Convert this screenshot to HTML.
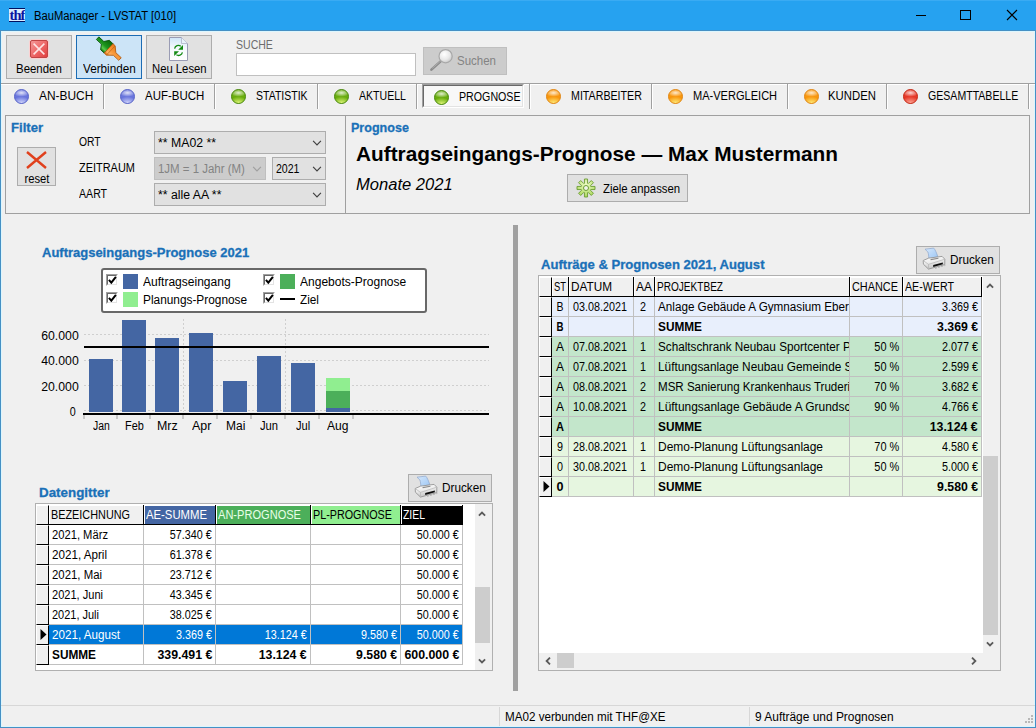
<!DOCTYPE html>
<html>
<head>
<meta charset="utf-8">
<title>BauManager - LVSTAT [010]</title>
<style>
*{box-sizing:border-box;margin:0;padding:0}
html,body{width:1036px;height:728px;overflow:hidden;background:#f0f0f0}
body{font-family:"Liberation Sans",sans-serif;font-size:12px;color:#000;position:relative}
.a{position:absolute}
.t{position:absolute;white-space:nowrap}
#win{position:absolute;left:0;top:30px;width:1036px;height:698px;background:#f0f0f0;border:1px solid #4590c4;box-shadow:inset 0 0 0 1px #dcf6fe}
#title{position:absolute;left:0;top:0;width:1036px;height:30px;background:#26a2f0;border-top:1px solid #3aabf3}
.btn{position:absolute;background:#e1e1e1;border:1px solid #adadad}
.btn.sel{background:#cce4f7;border-color:#1c6cb4}
.btn.dis{background:#cccccc;border-color:#bfbfbf}
.sep{position:absolute;width:2px;top:84px;height:25px;border-left:1px solid #a0a0a0;border-right:1px solid #fff}
.ball{position:absolute;width:15px;height:15px;border-radius:50%}
.ball.b{background:radial-gradient(ellipse 62% 30% at 50% 22%,rgba(255,255,255,.8),rgba(255,255,255,0) 100%),radial-gradient(ellipse 75% 55% at 50% 105%,#dce0ff,rgba(220,224,255,0) 100%),#6874dc;border:1px solid #5a66c8}
.ball.g{background:radial-gradient(ellipse 62% 30% at 50% 22%,rgba(255,255,255,.8),rgba(255,255,255,0) 100%),radial-gradient(ellipse 75% 55% at 50% 105%,#ecff84,rgba(236,255,132,0) 100%),#68ac0c;border:1px solid #4c8a12}
.ball.o{background:radial-gradient(ellipse 62% 30% at 50% 22%,rgba(255,255,255,.8),rgba(255,255,255,0) 100%),radial-gradient(ellipse 75% 55% at 50% 105%,#fff484,rgba(255,244,132,0) 100%),#f8960c;border:1px solid #e08818}
.ball.r{background:radial-gradient(ellipse 62% 30% at 50% 22%,rgba(255,255,255,.8),rgba(255,255,255,0) 100%),radial-gradient(ellipse 75% 55% at 50% 105%,#ffb0a0,rgba(255,176,160,0) 100%),#e63828;border:1px solid #c42c18}
.combo{position:absolute;background:#e1e1e1;border:1px solid #adadad;height:23px}
.combo.dis{background:#cccccc;border-color:#bfbfbf}
.grid{position:absolute;background:#fff;border:1px solid #b0b0b0}
.ln{position:absolute;background:#a0a0a0}
</style>
</head>
<body>
<div id="win"></div>
<div id="title"></div>

<div class="a" style="left:9px;top:8px;width:16px;height:14px;background:#d8ecff;border-top:1px solid #001060;border-bottom:1px solid #001060;overflow:hidden"><div class="t" style="left:0;top:-2px;width:16px;text-align:center;font-family:'Liberation Serif',serif;font-weight:bold;font-size:14.5px;line-height:16px;height:16px;color:#0a14a0;letter-spacing:-0.9px">thf</div></div>
<div class="t" style="top:9px;font-size:12px;line-height:14px;height:14px;color:#000;left:33.6px;transform-origin:0 50%;transform:scaleX(0.9351);">BauManager - LVSTAT [010]</div>
<svg class="a" style="left:900px;top:0" width="136" height="31" viewBox="0 0 136 31">
 <path d="M16 15.5h10" stroke="#000" stroke-width="1" fill="none"/>
 <rect x="60.5" y="10.5" width="10" height="9" stroke="#000" stroke-width="1" fill="none"/>
 <path d="M107 10l10 10M117 10l-10 10" stroke="#000" stroke-width="1.1" fill="none"/>
</svg>
<div class="btn" style="left:6px;top:35px;width:66px;height:44px"></div>
<div class="btn sel" style="left:76px;top:35px;width:66px;height:44px"></div>
<div class="btn" style="left:146px;top:35px;width:66px;height:44px"></div>
<div class="t" style="top:62px;font-size:12px;line-height:14px;height:14px;color:#000;left:16.3px;transform-origin:0 50%;transform:scaleX(0.9532);">Beenden</div>
<div class="t" style="top:62px;font-size:12px;line-height:14px;height:14px;color:#000;left:83.3px;transform-origin:0 50%;transform:scaleX(0.9769);">Verbinden</div>
<div class="t" style="top:62px;font-size:12px;line-height:14px;height:14px;color:#000;left:152.3px;transform-origin:0 50%;transform:scaleX(0.9406);">Neu Lesen</div>
<svg class="a" style="left:0;top:31px;z-index:2" width="520" height="50" viewBox="0 31 520 50">
<defs>
<linearGradient id="gr" x1="0" y1="0" x2="1" y2="1"><stop offset="0" stop-color="#f49a9a"/><stop offset="0.5" stop-color="#ee6a6a"/><stop offset="1" stop-color="#e03a3a"/></linearGradient>
<linearGradient id="gp" x1="0" y1="0" x2="0" y2="1"><stop offset="0" stop-color="#cfe6f8"/><stop offset="0.45" stop-color="#f4f9fd"/><stop offset="1" stop-color="#ffffff"/></linearGradient>
<linearGradient id="gg" x1="0" y1="0" x2="0" y2="1"><stop offset="0" stop-color="#0a6a0a"/><stop offset="0.55" stop-color="#1e961e"/><stop offset="0.8" stop-color="#5ccc4c"/><stop offset="1" stop-color="#0c700c"/></linearGradient>
<linearGradient id="go" x1="0" y1="0" x2="0" y2="1"><stop offset="0" stop-color="#e87818"/><stop offset="0.5" stop-color="#f89838"/><stop offset="0.8" stop-color="#ffb060"/><stop offset="1" stop-color="#d86808"/></linearGradient>
<radialGradient id="gl" cx="0.4" cy="0.35" r="0.7"><stop offset="0" stop-color="#ffffff"/><stop offset="0.6" stop-color="#e8e8e8"/><stop offset="1" stop-color="#c4c4c4"/></radialGradient>
</defs>
<!-- Beenden -->
<rect x="29.5" y="39.5" width="19" height="19" rx="2.5" fill="none" stroke="#fbd0d0" stroke-width="1"/>
<rect x="30.5" y="40.5" width="17" height="17" rx="1.5" fill="url(#gr)" stroke="#c04444" stroke-width="1"/>
<path d="M33.6 43.6L44.4 54.4M44.4 43.6L33.6 54.4" stroke="#fde4e4" stroke-width="1.5" fill="none"/>
<!-- Verbinden plug -->
<g transform="translate(108.6 48.4) rotate(43)">
<path d="M-15 -1.8H-8.2L-5 -6.4H0V6.4H-5L-8.2 1.8H-15Z" fill="url(#gg)" stroke="#065006" stroke-width="0.8"/>
<path d="M0 -6.4H3L8.2 -1.8H15.6V1.8H8.2L3 6.4H0Z" fill="url(#go)" stroke="#b05a10" stroke-width="0.8"/>
<path d="M3 -6V6" stroke="#c06818" stroke-width="0.7"/>
</g>
<!-- Neu Lesen page -->
<path d="M169.5 37.5H181.5L187.5 43.5V60.5H169.5Z" fill="url(#gp)" stroke="#9a9cb4" stroke-width="1"/>
<path d="M181.5 37.5V43.5H187.5" fill="#e8f2fa" stroke="#b0b4c8" stroke-width="0.8"/>
<path d="M174.6 48.6A3.9 3.9 0 0 1 180.8 46.2" fill="none" stroke="#138a13" stroke-width="1.3"/>
<path d="M183 45V49.8H178.2Z" fill="#138a13"/>
<path d="M182.4 52.4A3.9 3.9 0 0 1 176.4 54.8" fill="none" stroke="#138a13" stroke-width="1.3"/>
<path d="M174.2 56V51.3H179Z" fill="#138a13"/>
<!-- Suchen magnifier -->
<path d="M440.6 61.4L431.4 69.6" stroke="#8c8c8c" stroke-width="2.6" stroke-linecap="round"/>
<path d="M441 60.6L432.2 68.4" stroke="#b4b4b4" stroke-width="0.8"/>
<circle cx="445.6" cy="56.2" r="6.6" fill="url(#gl)" stroke="#a8a8a8" stroke-width="1.2"/>
</svg>
<div class="t" style="top:38px;font-size:12px;line-height:14px;height:14px;color:#6d6d6d;left:236px;transform-origin:0 50%;transform:scaleX(0.8782);">SUCHE</div>
<div class="a" style="left:236px;top:53px;width:180px;height:23px;background:#fff;border:1px solid #c0c0c0"></div>
<div class="btn dis" style="left:423px;top:47px;width:84px;height:28px"></div>
<div class="t" style="top:54px;font-size:12px;line-height:14px;height:14px;color:#838383;left:457px;transform-origin:0 50%;transform:scaleX(0.9582);">Suchen</div>
<div class="a" style="left:1px;top:83px;width:1034px;height:1px;background:#a0a0a0"></div>
<div class="a" style="left:1px;top:84px;width:1034px;height:1px;background:#fff"></div>
<div class="sep" style="left:103px"></div>
<div class="sep" style="left:214px"></div>
<div class="sep" style="left:317px"></div>
<div class="sep" style="left:416px"></div>
<div class="sep" style="left:529px"></div>
<div class="sep" style="left:651px"></div>
<div class="sep" style="left:787px"></div>
<div class="sep" style="left:886px"></div>
<div class="sep" style="left:1028px"></div>
<div class="a" style="left:422px;top:84px;width:102px;height:24px;background:#f8f8f8;border:1px solid #fff;border-top-color:#a0a0a0;border-left-color:#a0a0a0"></div>
<div class="a" style="left:423px;top:85px;width:100px;height:22px;border:1px solid #e3e3e3;border-top-color:#696969;border-left-color:#696969"></div>
<div class="ball b" style="left:14px;top:89px"></div>
<div class="t" style="top:89px;font-size:12px;line-height:14px;height:14px;color:#000;left:39px;transform-origin:0 50%;transform:scaleX(0.9932);">AN-BUCH</div>
<div class="ball b" style="left:120px;top:89px"></div>
<div class="t" style="top:89px;font-size:12px;line-height:14px;height:14px;color:#000;left:145px;transform-origin:0 50%;transform:scaleX(0.9565);">AUF-BUCH</div>
<div class="ball g" style="left:231px;top:89px"></div>
<div class="t" style="top:89px;font-size:12px;line-height:14px;height:14px;color:#000;left:256px;transform-origin:0 50%;transform:scaleX(0.876);">STATISTIK</div>
<div class="ball g" style="left:334px;top:89px"></div>
<div class="t" style="top:89px;font-size:12px;line-height:14px;height:14px;color:#000;left:359px;transform-origin:0 50%;transform:scaleX(0.8789);">AKTUELL</div>
<div class="ball g" style="left:434px;top:90px"></div>
<div class="t" style="top:90px;font-size:12px;line-height:14px;height:14px;color:#000;left:459px;transform-origin:0 50%;transform:scaleX(0.8881);">PROGNOSE</div>
<div class="ball o" style="left:546px;top:89px"></div>
<div class="t" style="top:89px;font-size:12px;line-height:14px;height:14px;color:#000;left:571px;transform-origin:0 50%;transform:scaleX(0.8887);">MITARBEITER</div>
<div class="ball o" style="left:668px;top:89px"></div>
<div class="t" style="top:89px;font-size:12px;line-height:14px;height:14px;color:#000;left:693px;transform-origin:0 50%;transform:scaleX(0.9205);">MA-VERGLEICH</div>
<div class="ball o" style="left:804px;top:89px"></div>
<div class="t" style="top:89px;font-size:12px;line-height:14px;height:14px;color:#000;left:828.2px;transform-origin:0 50%;transform:scaleX(0.9453);">KUNDEN</div>
<div class="ball r" style="left:903px;top:89px"></div>
<div class="t" style="top:89px;font-size:12px;line-height:14px;height:14px;color:#000;left:928px;transform-origin:0 50%;transform:scaleX(0.8811);">GESAMTTABELLE</div>
<div class="a" style="left:5px;top:115px;width:1025px;height:99px;border:1px solid #a0a0a0"></div>
<div class="ln" style="left:345px;top:115px;width:1px;height:99px"></div>
<div class="t" style="top:121px;font-size:13px;line-height:14px;height:14px;color:#1a70b8;font-weight:bold;left:10.5px;transform-origin:0 50%;transform:scaleX(1.0095);-webkit-text-stroke:0.3px #1a70b8;">Filter</div>
<div class="t" style="top:121px;font-size:13px;line-height:14px;height:14px;color:#1a70b8;font-weight:bold;left:350.7px;transform-origin:0 50%;transform:scaleX(0.9655);-webkit-text-stroke:0.3px #1a70b8;">Prognose</div>
<div class="btn" style="left:17px;top:147px;width:39px;height:39px"></div>
<svg class="a" style="left:24px;top:150px" width="25" height="20" viewBox="0 0 25 20"><path d="M3 2L22 18M22 2L3 18" stroke="#e0401c" stroke-width="2.4" fill="none"/></svg>
<div class="t" style="top:172px;font-size:12px;line-height:14px;height:14px;color:#000;left:-163.5px;width:400px;text-align:center;transform-origin:50% 50%;transform:scaleX(0.9368);">reset</div>
<div class="t" style="top:135px;font-size:12px;line-height:14px;height:14px;color:#000;left:79px;transform-origin:0 50%;transform:scaleX(0.8597);">ORT</div>
<div class="t" style="top:161px;font-size:12px;line-height:14px;height:14px;color:#000;left:79px;transform-origin:0 50%;transform:scaleX(0.9113);">ZEITRAUM</div>
<div class="t" style="top:187px;font-size:12px;line-height:14px;height:14px;color:#000;left:79px;transform-origin:0 50%;transform:scaleX(0.8837);">AART</div>
<div class="combo" style="left:154px;top:131px;width:172px"></div>
<div class="combo dis" style="left:154px;top:157px;width:112px"></div>
<div class="combo" style="left:272px;top:157px;width:54px"></div>
<div class="combo" style="left:154px;top:183px;width:172px"></div>
<div class="t" style="top:136px;font-size:12px;line-height:14px;height:14px;color:#000;left:157.5px;transform-origin:0 50%;transform:scaleX(1.0229);">** MA02 **</div>
<div class="t" style="top:162px;font-size:12px;line-height:14px;height:14px;color:#838383;left:158px;transform-origin:0 50%;transform:scaleX(0.9546);">1JM = 1 Jahr (M)</div>
<div class="t" style="top:162px;font-size:12px;line-height:14px;height:14px;color:#000;left:276px;transform-origin:0 50%;transform:scaleX(0.88);">2021</div>
<div class="t" style="top:188px;font-size:12px;line-height:14px;height:14px;color:#000;left:157.5px;transform-origin:0 50%;transform:scaleX(1.0218);">** alle AA **</div>
<svg class="a" style="left:312px;top:140px" width="10" height="6" viewBox="0 0 10 6"><path d="M1.1 0.9L5 4.8L8.9 0.9" stroke="#404040" stroke-width="1.2" fill="none"/></svg>
<svg class="a" style="left:252.3px;top:166px" width="10" height="6" viewBox="0 0 10 6"><path d="M1.1 0.9L5 4.8L8.9 0.9" stroke="#a0a0a0" stroke-width="1.2" fill="none"/></svg>
<svg class="a" style="left:312px;top:166px" width="10" height="6" viewBox="0 0 10 6"><path d="M1.1 0.9L5 4.8L8.9 0.9" stroke="#404040" stroke-width="1.2" fill="none"/></svg>
<svg class="a" style="left:312px;top:192px" width="10" height="6" viewBox="0 0 10 6"><path d="M1.1 0.9L5 4.8L8.9 0.9" stroke="#404040" stroke-width="1.2" fill="none"/></svg>
<div class="t" style="top:142px;font-size:20.5px;line-height:24px;height:24px;color:#000;font-weight:bold;left:356px;transform-origin:0 50%;transform:scaleX(1.0146);">Auftragseingangs-Prognose — Max Mustermann</div>
<div class="t" style="top:175px;font-size:16px;line-height:20px;height:20px;color:#000;font-style:italic;left:356.3px;transform-origin:0 50%;transform:scaleX(1.0342);">Monate 2021</div>
<div class="btn" style="left:567px;top:174px;width:121px;height:28px"></div>
<div class="t" style="top:182px;font-size:12px;line-height:14px;height:14px;color:#000;left:603px;transform-origin:0 50%;transform:scaleX(0.9485);">Ziele anpassen</div>
<svg class="a" style="left:576px;top:178px" width="20" height="20" viewBox="-10 -10 20 20">
<defs><radialGradient id="gge" cx="0.5" cy="0.3" r="0.75"><stop offset="0" stop-color="#ecfac4"/><stop offset="1" stop-color="#a6d654"/></radialGradient></defs>
<path d="M-1.55 -4.70 L-1.55 -9.00 L1.55 -9.00 L1.55 -4.70 L2.23 -4.42 L5.27 -7.46 L7.46 -5.27 L4.42 -2.23 L4.70 -1.55 L9.00 -1.55 L9.00 1.55 L4.70 1.55 L4.42 2.23 L7.46 5.27 L5.27 7.46 L2.23 4.42 L1.55 4.70 L1.55 9.00 L-1.55 9.00 L-1.55 4.70 L-2.23 4.42 L-5.27 7.46 L-7.46 5.27 L-4.42 2.23 L-4.70 1.55 L-9.00 1.55 L-9.00 -1.55 L-4.70 -1.55 L-4.42 -2.23 L-7.46 -5.27 L-5.27 -7.46 L-2.23 -4.42Z" fill="url(#gge)" stroke="#6c9c34" stroke-width="0.9"/>
<circle cx="0" cy="0" r="2.5" fill="#f0f4e8" stroke="#6c9c34" stroke-width="1"/>
</svg>
<div class="a" style="left:513px;top:225px;width:5px;height:466px;background:#a0a0a0"></div>
<div class="t" style="top:245px;font-size:13px;line-height:16px;height:16px;color:#1a70b8;font-weight:bold;left:42.3px;transform-origin:0 50%;transform:scaleX(0.9989);-webkit-text-stroke:0.3px #1a70b8;">Auftragseingangs-Prognose 2021</div>
<div class="a" style="left:101px;top:268px;width:326px;height:45px;background:#fff;border:2px solid #686868;border-radius:3px"></div>
<div class="a" style="left:106px;top:274px;width:12px;height:12px;background:#fff;border:1px solid #fff;border-top-color:#a0a0a0;border-left-color:#a0a0a0"></div>
<div class="a" style="left:107px;top:275px;width:10px;height:10px;border:1px solid #e3e3e3;border-top-color:#696969;border-left-color:#696969"></div>
<svg class="a" style="left:108px;top:276px" width="9" height="9" viewBox="0 0 9 9"><path d="M0.9 3.9L3.3 6.6L7.9 0.9" stroke="#000" stroke-width="2" fill="none"/></svg>
<div class="a" style="left:106px;top:292px;width:12px;height:12px;background:#fff;border:1px solid #fff;border-top-color:#a0a0a0;border-left-color:#a0a0a0"></div>
<div class="a" style="left:107px;top:293px;width:10px;height:10px;border:1px solid #e3e3e3;border-top-color:#696969;border-left-color:#696969"></div>
<svg class="a" style="left:108px;top:294px" width="9" height="9" viewBox="0 0 9 9"><path d="M0.9 3.9L3.3 6.6L7.9 0.9" stroke="#000" stroke-width="2" fill="none"/></svg>
<div class="a" style="left:263px;top:274px;width:12px;height:12px;background:#fff;border:1px solid #fff;border-top-color:#a0a0a0;border-left-color:#a0a0a0"></div>
<div class="a" style="left:264px;top:275px;width:10px;height:10px;border:1px solid #e3e3e3;border-top-color:#696969;border-left-color:#696969"></div>
<svg class="a" style="left:265px;top:276px" width="9" height="9" viewBox="0 0 9 9"><path d="M0.9 3.9L3.3 6.6L7.9 0.9" stroke="#000" stroke-width="2" fill="none"/></svg>
<div class="a" style="left:263px;top:292px;width:12px;height:12px;background:#fff;border:1px solid #fff;border-top-color:#a0a0a0;border-left-color:#a0a0a0"></div>
<div class="a" style="left:264px;top:293px;width:10px;height:10px;border:1px solid #e3e3e3;border-top-color:#696969;border-left-color:#696969"></div>
<svg class="a" style="left:265px;top:294px" width="9" height="9" viewBox="0 0 9 9"><path d="M0.9 3.9L3.3 6.6L7.9 0.9" stroke="#000" stroke-width="2" fill="none"/></svg>
<div class="a" style="left:123px;top:274px;width:15px;height:15px;background:#4466a3"></div>
<div class="a" style="left:123px;top:292px;width:15px;height:15px;background:#90ee90"></div>
<div class="a" style="left:280px;top:274px;width:15px;height:15px;background:#4caf5a"></div>
<div class="a" style="left:280px;top:298px;width:15px;height:2px;background:#000"></div>
<div class="t" style="top:275px;font-size:12px;line-height:14px;height:14px;color:#000;left:143px;transform-origin:0 50%;transform:scaleX(1.0022);">Auftragseingang</div>
<div class="t" style="top:293px;font-size:12px;line-height:14px;height:14px;color:#000;left:143px;transform-origin:0 50%;transform:scaleX(0.9876);">Planungs-Prognose</div>
<div class="t" style="top:275px;font-size:12px;line-height:14px;height:14px;color:#000;left:300px;transform-origin:0 50%;transform:scaleX(1.0011);">Angebots-Prognose</div>
<div class="t" style="top:293px;font-size:12px;line-height:14px;height:14px;color:#000;left:300px;transform-origin:0 50%;transform:scaleX(0.9822);">Ziel</div>
<svg class="a" style="left:0;top:0" width="520" height="440" viewBox="0 0 520 440" shape-rendering="crispEdges">
<path d="M84 334.5H489" stroke="#cfcfcf" stroke-width="1" stroke-dasharray="2 2" fill="none"/>
<path d="M84 360.5H489" stroke="#cfcfcf" stroke-width="1" stroke-dasharray="2 2" fill="none"/>
<path d="M84 385.5H489" stroke="#cfcfcf" stroke-width="1" stroke-dasharray="2 2" fill="none"/>
<path d="M84 410.5H489" stroke="#cfcfcf" stroke-width="1" stroke-dasharray="2 2" fill="none"/>
<path d="M183.5 319V412" stroke="#cfcfcf" stroke-width="1" stroke-dasharray="2 2" fill="none"/>
<path d="M285.5 319V412" stroke="#cfcfcf" stroke-width="1" stroke-dasharray="2 2" fill="none"/>
<rect x="89" y="359" width="24" height="53" fill="#4466a3"/>
<rect x="122" y="320" width="24" height="92" fill="#4466a3"/>
<rect x="155" y="338" width="24" height="74" fill="#4466a3"/>
<rect x="189" y="333" width="24" height="79" fill="#4466a3"/>
<rect x="223" y="381" width="24" height="31" fill="#4466a3"/>
<rect x="257" y="356" width="24" height="56" fill="#4466a3"/>
<rect x="291" y="363" width="24" height="49" fill="#4466a3"/>
<rect x="326" y="378" width="24" height="13" fill="#90ee90"/>
<rect x="326" y="391" width="24" height="17" fill="#4caf5a"/>
<rect x="326" y="408" width="24" height="4" fill="#4466a3"/>
<rect x="84" y="346" width="405" height="2" fill="#000"/>
<rect x="83" y="413" width="406" height="2" fill="#000"/>
<rect x="83.5" y="415" width="1" height="4" fill="#a0a0a0" shape-rendering="auto"/>
<rect x="116.5" y="415" width="1" height="4" fill="#a0a0a0" shape-rendering="auto"/>
<rect x="149.5" y="415" width="1" height="4" fill="#a0a0a0" shape-rendering="auto"/>
<rect x="182.5" y="415" width="1" height="4" fill="#a0a0a0" shape-rendering="auto"/>
<rect x="216.5" y="415" width="1" height="4" fill="#a0a0a0" shape-rendering="auto"/>
<rect x="250.5" y="415" width="1" height="4" fill="#a0a0a0" shape-rendering="auto"/>
<rect x="284.5" y="415" width="1" height="4" fill="#a0a0a0" shape-rendering="auto"/>
<rect x="318.5" y="415" width="1" height="4" fill="#a0a0a0" shape-rendering="auto"/>
<rect x="352.5" y="415" width="1" height="4" fill="#a0a0a0" shape-rendering="auto"/>
</svg>
<div class="t" style="top:328.5px;font-size:12px;line-height:14px;height:14px;color:#000;right:957.8px;transform-origin:100% 50%;transform:scaleX(1.0217);">60.000</div>
<div class="t" style="top:354px;font-size:12px;line-height:14px;height:14px;color:#000;right:957.8px;transform-origin:100% 50%;transform:scaleX(1.0217);">40.000</div>
<div class="t" style="top:379.5px;font-size:12px;line-height:14px;height:14px;color:#000;right:957.8px;transform-origin:100% 50%;transform:scaleX(1.0217);">20.000</div>
<div class="t" style="top:405px;font-size:12px;line-height:14px;height:14px;color:#000;right:960.8px;transform-origin:100% 50%;transform:scaleX(0.8972);">0</div>
<div class="t" style="top:419px;font-size:12px;line-height:14px;height:14px;color:#000;left:93.4px;transform-origin:0 50%;transform:scaleX(0.8678);">Jan</div>
<div class="t" style="top:419px;font-size:12px;line-height:14px;height:14px;color:#000;left:125.2px;transform-origin:0 50%;transform:scaleX(0.9088);">Feb</div>
<div class="t" style="top:419px;font-size:12px;line-height:14px;height:14px;color:#000;left:157.4px;transform-origin:0 50%;transform:scaleX(1.035);">Mrz</div>
<div class="t" style="top:419px;font-size:12px;line-height:14px;height:14px;color:#000;left:191.8px;transform-origin:0 50%;transform:scaleX(1.0328);">Apr</div>
<div class="t" style="top:419px;font-size:12px;line-height:14px;height:14px;color:#000;left:225.6px;transform-origin:0 50%;transform:scaleX(0.9977);">Mai</div>
<div class="t" style="top:419px;font-size:12px;line-height:14px;height:14px;color:#000;left:259.79999999999995px;transform-origin:0 50%;transform:scaleX(0.9349);">Jun</div>
<div class="t" style="top:419px;font-size:12px;line-height:14px;height:14px;color:#000;left:296.0px;transform-origin:0 50%;transform:scaleX(0.9255);">Jul</div>
<div class="t" style="top:419px;font-size:12px;line-height:14px;height:14px;color:#000;left:327.4px;transform-origin:0 50%;transform:scaleX(1.0066);">Aug</div>
<div class="t" style="top:485px;font-size:13px;line-height:16px;height:16px;color:#1a70b8;font-weight:bold;left:39px;transform-origin:0 50%;transform:scaleX(1.0288);-webkit-text-stroke:0.3px #1a70b8;">Datengitter</div>
<div class="btn" style="left:408px;top:474px;width:84px;height:28px"></div>
<div class="t" style="top:481px;font-size:12px;line-height:14px;height:14px;color:#000;left:442.4px;transform-origin:0 50%;transform:scaleX(0.9779);">Drucken</div>
<svg class="a" style="left:410px;top:472px" width="30" height="30" viewBox="0 0 30 30">
<defs><linearGradient id="gpa410" x1="0" y1="0" x2="1" y2="1"><stop offset="0" stop-color="#d6e8fc"/><stop offset="1" stop-color="#9cc6f4"/></linearGradient>
<linearGradient id="gpb410" x1="0" y1="0" x2="0.3" y2="1"><stop offset="0" stop-color="#ffffff"/><stop offset="0.5" stop-color="#ededed"/><stop offset="1" stop-color="#c4c4c4"/></linearGradient></defs>
<path d="M7 5.2L15.7 4.1C17.2 5.6 18.6 9 19.8 12.6L10.9 14.9C10.7 12 10.5 9.6 9.9 8Z" fill="url(#gpa410)" stroke="#8ea6cc" stroke-width="0.7"/>
<path d="M5.2 16.5L10.7 14.1L24.1 12.4L26.8 15.2V20.6L10.5 25.1L5.4 20.2Z" fill="url(#gpb410)" stroke="#8c8c8c" stroke-width="0.8" stroke-linejoin="round"/>
<path d="M5.2 16.5L10.5 20.4L26.8 15.2" fill="none" stroke="#b4b4b4" stroke-width="0.7"/>
<path d="M10.5 20.4V25.1" stroke="#b4b4b4" stroke-width="0.7"/>
<path d="M12.6 15.6L20.4 14.2" stroke="#8a8a8a" stroke-width="1.1"/>
<path d="M15.2 21.1L24.8 18.5V20.2L15.2 22.9Z" fill="#0c0c0c"/>
<path d="M17 24.4L27.4 21.4" stroke="#a8a8a8" stroke-width="0.8" stroke-dasharray="2 1.2"/>
</svg>
<div class="grid" style="left:35px;top:503px;width:458px;height:168px"></div>
<div class="a" style="left:36px;top:505px;width:13px;height:20px;background:#f0f0f0;border-right:1px solid #000;border-bottom:1px solid #000;border-top:1px solid #fff;border-left:1px solid #fff"></div>
<div class="a" style="left:49px;top:505px;width:95px;height:20px;background:#fff;border-right:1px solid #000;border-bottom:1px solid #000"></div>
<div class="a" style="left:50px;top:506px;width:93px;height:18px;background:#f0f0f0"></div>
<div class="t" style="top:508px;font-size:12px;line-height:14px;height:14px;color:#000;left:51px;transform-origin:0 50%;transform:scaleX(0.9045);">BEZEICHNUNG</div>
<div class="a" style="left:144px;top:505px;width:72px;height:20px;background:#fff;border-right:1px solid #000;border-bottom:1px solid #000"></div>
<div class="a" style="left:145px;top:506px;width:70px;height:18px;background:#4466a3"></div>
<div class="t" style="top:508px;font-size:12px;line-height:14px;height:14px;color:#fff;left:146px;transform-origin:0 50%;transform:scaleX(0.9432);">AE-SUMME</div>
<div class="a" style="left:216px;top:505px;width:95px;height:20px;background:#fff;border-right:1px solid #000;border-bottom:1px solid #000"></div>
<div class="a" style="left:217px;top:506px;width:93px;height:18px;background:#4caf5a"></div>
<div class="t" style="top:508px;font-size:12px;line-height:14px;height:14px;color:#e8ffe8;left:218px;transform-origin:0 50%;transform:scaleX(0.9221);">AN-PROGNOSE</div>
<div class="a" style="left:311px;top:505px;width:90px;height:20px;background:#fff;border-right:1px solid #000;border-bottom:1px solid #000"></div>
<div class="a" style="left:312px;top:506px;width:88px;height:18px;background:#90ee90"></div>
<div class="t" style="top:508px;font-size:12px;line-height:14px;height:14px;color:#000;left:313px;transform-origin:0 50%;transform:scaleX(0.8974);">PL-PROGNOSE</div>
<div class="a" style="left:401px;top:505px;width:62px;height:20px;background:#fff;border-right:1px solid #000;border-bottom:1px solid #000"></div>
<div class="a" style="left:402px;top:506px;width:60px;height:18px;background:#000"></div>
<div class="t" style="top:508px;font-size:12px;line-height:14px;height:14px;color:#fff;left:403px;transform-origin:0 50%;transform:scaleX(0.8681);">ZIEL</div>
<div class="a" style="left:36px;top:525px;width:13px;height:20px;background:#f0f0f0;border-right:1px solid #000;border-bottom:1px solid #000;border-top:1px solid #fff;border-left:1px solid #fff"></div>
<div class="a" style="left:49px;top:525px;width:95px;height:20px;background:#fff;border-right:1px solid #c0c0c0;border-bottom:1px solid #c0c0c0"></div>
<div class="a" style="left:49px;top:525px;width:94px;height:20px;overflow:hidden">
<div class="t" style="top:3px;font-size:12px;line-height:14px;height:14px;color:#000;left:3px;transform-origin:0 50%;transform:scaleX(0.9328);">2021, März</div>
</div>
<div class="a" style="left:144px;top:525px;width:72px;height:20px;background:#fff;border-right:1px solid #c0c0c0;border-bottom:1px solid #c0c0c0"></div>
<div class="t" style="top:528px;font-size:12px;line-height:14px;height:14px;color:#000;right:824px;transform-origin:100% 50%;transform:scaleX(0.899);">57.340 €</div>
<div class="a" style="left:216px;top:525px;width:95px;height:20px;background:#fff;border-right:1px solid #c0c0c0;border-bottom:1px solid #c0c0c0"></div>
<div class="a" style="left:311px;top:525px;width:90px;height:20px;background:#fff;border-right:1px solid #c0c0c0;border-bottom:1px solid #c0c0c0"></div>
<div class="a" style="left:401px;top:525px;width:62px;height:20px;background:#fff;border-right:1px solid #c0c0c0;border-bottom:1px solid #c0c0c0"></div>
<div class="t" style="top:528px;font-size:12px;line-height:14px;height:14px;color:#000;right:577px;transform-origin:100% 50%;transform:scaleX(0.899);">50.000 €</div>
<div class="a" style="left:36px;top:545px;width:13px;height:20px;background:#f0f0f0;border-right:1px solid #000;border-bottom:1px solid #000;border-top:1px solid #fff;border-left:1px solid #fff"></div>
<div class="a" style="left:49px;top:545px;width:95px;height:20px;background:#fff;border-right:1px solid #c0c0c0;border-bottom:1px solid #c0c0c0"></div>
<div class="a" style="left:49px;top:545px;width:94px;height:20px;overflow:hidden">
<div class="t" style="top:3px;font-size:12px;line-height:14px;height:14px;color:#000;left:3px;transform-origin:0 50%;transform:scaleX(0.9697);">2021, April</div>
</div>
<div class="a" style="left:144px;top:545px;width:72px;height:20px;background:#fff;border-right:1px solid #c0c0c0;border-bottom:1px solid #c0c0c0"></div>
<div class="t" style="top:548px;font-size:12px;line-height:14px;height:14px;color:#000;right:824px;transform-origin:100% 50%;transform:scaleX(0.899);">61.378 €</div>
<div class="a" style="left:216px;top:545px;width:95px;height:20px;background:#fff;border-right:1px solid #c0c0c0;border-bottom:1px solid #c0c0c0"></div>
<div class="a" style="left:311px;top:545px;width:90px;height:20px;background:#fff;border-right:1px solid #c0c0c0;border-bottom:1px solid #c0c0c0"></div>
<div class="a" style="left:401px;top:545px;width:62px;height:20px;background:#fff;border-right:1px solid #c0c0c0;border-bottom:1px solid #c0c0c0"></div>
<div class="t" style="top:548px;font-size:12px;line-height:14px;height:14px;color:#000;right:577px;transform-origin:100% 50%;transform:scaleX(0.899);">50.000 €</div>
<div class="a" style="left:36px;top:565px;width:13px;height:20px;background:#f0f0f0;border-right:1px solid #000;border-bottom:1px solid #000;border-top:1px solid #fff;border-left:1px solid #fff"></div>
<div class="a" style="left:49px;top:565px;width:95px;height:20px;background:#fff;border-right:1px solid #c0c0c0;border-bottom:1px solid #c0c0c0"></div>
<div class="a" style="left:49px;top:565px;width:94px;height:20px;overflow:hidden">
<div class="t" style="top:3px;font-size:12px;line-height:14px;height:14px;color:#000;left:3px;transform-origin:0 50%;transform:scaleX(0.9487);">2021, Mai</div>
</div>
<div class="a" style="left:144px;top:565px;width:72px;height:20px;background:#fff;border-right:1px solid #c0c0c0;border-bottom:1px solid #c0c0c0"></div>
<div class="t" style="top:568px;font-size:12px;line-height:14px;height:14px;color:#000;right:824px;transform-origin:100% 50%;transform:scaleX(0.899);">23.712 €</div>
<div class="a" style="left:216px;top:565px;width:95px;height:20px;background:#fff;border-right:1px solid #c0c0c0;border-bottom:1px solid #c0c0c0"></div>
<div class="a" style="left:311px;top:565px;width:90px;height:20px;background:#fff;border-right:1px solid #c0c0c0;border-bottom:1px solid #c0c0c0"></div>
<div class="a" style="left:401px;top:565px;width:62px;height:20px;background:#fff;border-right:1px solid #c0c0c0;border-bottom:1px solid #c0c0c0"></div>
<div class="t" style="top:568px;font-size:12px;line-height:14px;height:14px;color:#000;right:577px;transform-origin:100% 50%;transform:scaleX(0.899);">50.000 €</div>
<div class="a" style="left:36px;top:585px;width:13px;height:20px;background:#f0f0f0;border-right:1px solid #000;border-bottom:1px solid #000;border-top:1px solid #fff;border-left:1px solid #fff"></div>
<div class="a" style="left:49px;top:585px;width:95px;height:20px;background:#fff;border-right:1px solid #c0c0c0;border-bottom:1px solid #c0c0c0"></div>
<div class="a" style="left:49px;top:585px;width:94px;height:20px;overflow:hidden">
<div class="t" style="top:3px;font-size:12px;line-height:14px;height:14px;color:#000;left:3px;transform-origin:0 50%;transform:scaleX(0.9207);">2021, Juni</div>
</div>
<div class="a" style="left:144px;top:585px;width:72px;height:20px;background:#fff;border-right:1px solid #c0c0c0;border-bottom:1px solid #c0c0c0"></div>
<div class="t" style="top:588px;font-size:12px;line-height:14px;height:14px;color:#000;right:824px;transform-origin:100% 50%;transform:scaleX(0.899);">43.345 €</div>
<div class="a" style="left:216px;top:585px;width:95px;height:20px;background:#fff;border-right:1px solid #c0c0c0;border-bottom:1px solid #c0c0c0"></div>
<div class="a" style="left:311px;top:585px;width:90px;height:20px;background:#fff;border-right:1px solid #c0c0c0;border-bottom:1px solid #c0c0c0"></div>
<div class="a" style="left:401px;top:585px;width:62px;height:20px;background:#fff;border-right:1px solid #c0c0c0;border-bottom:1px solid #c0c0c0"></div>
<div class="t" style="top:588px;font-size:12px;line-height:14px;height:14px;color:#000;right:577px;transform-origin:100% 50%;transform:scaleX(0.899);">50.000 €</div>
<div class="a" style="left:36px;top:605px;width:13px;height:20px;background:#f0f0f0;border-right:1px solid #000;border-bottom:1px solid #000;border-top:1px solid #fff;border-left:1px solid #fff"></div>
<div class="a" style="left:49px;top:605px;width:95px;height:20px;background:#fff;border-right:1px solid #c0c0c0;border-bottom:1px solid #c0c0c0"></div>
<div class="a" style="left:49px;top:605px;width:94px;height:20px;overflow:hidden">
<div class="t" style="top:3px;font-size:12px;line-height:14px;height:14px;color:#000;left:3px;transform-origin:0 50%;transform:scaleX(0.9148);">2021, Juli</div>
</div>
<div class="a" style="left:144px;top:605px;width:72px;height:20px;background:#fff;border-right:1px solid #c0c0c0;border-bottom:1px solid #c0c0c0"></div>
<div class="t" style="top:608px;font-size:12px;line-height:14px;height:14px;color:#000;right:824px;transform-origin:100% 50%;transform:scaleX(0.899);">38.025 €</div>
<div class="a" style="left:216px;top:605px;width:95px;height:20px;background:#fff;border-right:1px solid #c0c0c0;border-bottom:1px solid #c0c0c0"></div>
<div class="a" style="left:311px;top:605px;width:90px;height:20px;background:#fff;border-right:1px solid #c0c0c0;border-bottom:1px solid #c0c0c0"></div>
<div class="a" style="left:401px;top:605px;width:62px;height:20px;background:#fff;border-right:1px solid #c0c0c0;border-bottom:1px solid #c0c0c0"></div>
<div class="t" style="top:608px;font-size:12px;line-height:14px;height:14px;color:#000;right:577px;transform-origin:100% 50%;transform:scaleX(0.899);">50.000 €</div>
<div class="a" style="left:36px;top:625px;width:13px;height:20px;background:#f0f0f0;border-right:1px solid #000;border-bottom:1px solid #000;border-top:1px solid #fff;border-left:1px solid #fff"></div>
<svg class="a" style="left:40px;top:629px" width="7" height="11" viewBox="0 0 7 11"><path d="M0.5 0L6.5 5.5L0.5 11Z" fill="#000"/></svg>
<div class="a" style="left:49px;top:625px;width:95px;height:20px;background:#0078d7;border-right:1px solid #c0c0c0;border-bottom:1px solid #c0c0c0"></div>
<div class="a" style="left:49px;top:625px;width:94px;height:20px;overflow:hidden">
<div class="t" style="top:3px;font-size:12px;line-height:14px;height:14px;color:#fff;left:3px;transform-origin:0 50%;transform:scaleX(0.9706);">2021, August</div>
</div>
<div class="a" style="left:144px;top:625px;width:72px;height:20px;background:#0078d7;border-right:1px solid #c0c0c0;border-bottom:1px solid #c0c0c0"></div>
<div class="t" style="top:628px;font-size:12px;line-height:14px;height:14px;color:#fff;right:824px;transform-origin:100% 50%;transform:scaleX(0.8989);">3.369 €</div>
<div class="a" style="left:216px;top:625px;width:95px;height:20px;background:#0078d7;border-right:1px solid #c0c0c0;border-bottom:1px solid #c0c0c0"></div>
<div class="t" style="top:628px;font-size:12px;line-height:14px;height:14px;color:#fff;right:729px;transform-origin:100% 50%;transform:scaleX(0.899);">13.124 €</div>
<div class="a" style="left:311px;top:625px;width:90px;height:20px;background:#0078d7;border-right:1px solid #c0c0c0;border-bottom:1px solid #c0c0c0"></div>
<div class="t" style="top:628px;font-size:12px;line-height:14px;height:14px;color:#fff;right:639px;transform-origin:100% 50%;transform:scaleX(0.8989);">9.580 €</div>
<div class="a" style="left:401px;top:625px;width:62px;height:20px;background:#0078d7;border-right:1px solid #c0c0c0;border-bottom:1px solid #c0c0c0"></div>
<div class="t" style="top:628px;font-size:12px;line-height:14px;height:14px;color:#fff;right:577px;transform-origin:100% 50%;transform:scaleX(0.899);">50.000 €</div>
<div class="a" style="left:36px;top:645px;width:13px;height:20px;background:#f0f0f0;border-right:1px solid #000;border-bottom:1px solid #000;border-top:1px solid #fff;border-left:1px solid #fff"></div>
<div class="a" style="left:49px;top:645px;width:95px;height:20px;background:#fff;border-right:1px solid #c0c0c0;border-bottom:1px solid #c0c0c0"></div>
<div class="a" style="left:49px;top:645px;width:94px;height:20px;overflow:hidden">
<div class="t" style="top:3px;font-size:12px;line-height:14px;height:14px;color:#000;font-weight:bold;left:3px;transform-origin:0 50%;transform:scaleX(0.985);">SUMME</div>
</div>
<div class="a" style="left:144px;top:645px;width:72px;height:20px;background:#fff;border-right:1px solid #c0c0c0;border-bottom:1px solid #c0c0c0"></div>
<div class="t" style="top:648px;font-size:12px;line-height:14px;height:14px;color:#000;font-weight:bold;right:824px;transform-origin:100% 50%;transform:scaleX(1.0301);">339.491 €</div>
<div class="a" style="left:216px;top:645px;width:95px;height:20px;background:#fff;border-right:1px solid #c0c0c0;border-bottom:1px solid #c0c0c0"></div>
<div class="t" style="top:648px;font-size:12px;line-height:14px;height:14px;color:#000;font-weight:bold;right:729px;transform-origin:100% 50%;transform:scaleX(1.0274);">13.124 €</div>
<div class="a" style="left:311px;top:645px;width:90px;height:20px;background:#fff;border-right:1px solid #c0c0c0;border-bottom:1px solid #c0c0c0"></div>
<div class="t" style="top:648px;font-size:12px;line-height:14px;height:14px;color:#000;font-weight:bold;right:639px;transform-origin:100% 50%;transform:scaleX(1.0238);">9.580 €</div>
<div class="a" style="left:401px;top:645px;width:62px;height:20px;background:#fff;border-right:1px solid #c0c0c0;border-bottom:1px solid #c0c0c0"></div>
<div class="t" style="top:648px;font-size:12px;line-height:14px;height:14px;color:#000;font-weight:bold;right:577px;transform-origin:100% 50%;transform:scaleX(1.0301);">600.000 €</div>
<div class="a" style="left:475px;top:504px;width:17px;height:166px;background:#f0f0f0"></div>
<div class="a" style="left:475px;top:587px;width:15px;height:56px;background:#cdcdcd"></div>
<svg class="a" style="left:478.4px;top:511px" width="8" height="6" viewBox="0 0 8 6"><path d="M0.9 4.7L4 1.6L7.1 4.7" stroke="#5a5a5a" stroke-width="1.8" fill="none"/></svg>
<svg class="a" style="left:478.4px;top:657.5px" width="8" height="6" viewBox="0 0 8 6"><path d="M0.9 1.3L4 4.4L7.1 1.3" stroke="#5a5a5a" stroke-width="1.8" fill="none"/></svg>
<div class="t" style="top:257px;font-size:13px;line-height:16px;height:16px;color:#1a70b8;font-weight:bold;left:541px;transform-origin:0 50%;transform:scaleX(1.0068);-webkit-text-stroke:0.3px #1a70b8;">Aufträge &amp; Prognosen 2021, August</div>
<div class="btn" style="left:916px;top:246px;width:84px;height:28px"></div>
<div class="t" style="top:253px;font-size:12px;line-height:14px;height:14px;color:#000;left:950.4px;transform-origin:0 50%;transform:scaleX(0.9779);">Drucken</div>
<svg class="a" style="left:918px;top:244px" width="30" height="30" viewBox="0 0 30 30">
<defs><linearGradient id="gpa918" x1="0" y1="0" x2="1" y2="1"><stop offset="0" stop-color="#d6e8fc"/><stop offset="1" stop-color="#9cc6f4"/></linearGradient>
<linearGradient id="gpb918" x1="0" y1="0" x2="0.3" y2="1"><stop offset="0" stop-color="#ffffff"/><stop offset="0.5" stop-color="#ededed"/><stop offset="1" stop-color="#c4c4c4"/></linearGradient></defs>
<path d="M7 5.2L15.7 4.1C17.2 5.6 18.6 9 19.8 12.6L10.9 14.9C10.7 12 10.5 9.6 9.9 8Z" fill="url(#gpa918)" stroke="#8ea6cc" stroke-width="0.7"/>
<path d="M5.2 16.5L10.7 14.1L24.1 12.4L26.8 15.2V20.6L10.5 25.1L5.4 20.2Z" fill="url(#gpb918)" stroke="#8c8c8c" stroke-width="0.8" stroke-linejoin="round"/>
<path d="M5.2 16.5L10.5 20.4L26.8 15.2" fill="none" stroke="#b4b4b4" stroke-width="0.7"/>
<path d="M10.5 20.4V25.1" stroke="#b4b4b4" stroke-width="0.7"/>
<path d="M12.6 15.6L20.4 14.2" stroke="#8a8a8a" stroke-width="1.1"/>
<path d="M15.2 21.1L24.8 18.5V20.2L15.2 22.9Z" fill="#0c0c0c"/>
<path d="M17 24.4L27.4 21.4" stroke="#a8a8a8" stroke-width="0.8" stroke-dasharray="2 1.2"/>
</svg>
<div class="grid" style="left:538px;top:275px;width:463px;height:396px"></div>
<div class="a" style="left:539px;top:277px;width:13px;height:20px;background:#f0f0f0;border-right:1px solid #000;border-bottom:1px solid #000;border-top:1px solid #fff;border-left:1px solid #fff"></div>
<div class="a" style="left:552px;top:277px;width:17px;height:20px;background:#fff;border-right:1px solid #000;border-bottom:1px solid #000"></div>
<div class="a" style="left:553px;top:278px;width:15px;height:18px;background:#f0f0f0"></div>
<div class="t" style="top:280px;font-size:12px;line-height:14px;height:14px;color:#000;left:554px;transform-origin:0 50%;transform:scaleX(0.7821);">ST</div>
<div class="a" style="left:569px;top:277px;width:65px;height:20px;background:#fff;border-right:1px solid #000;border-bottom:1px solid #000"></div>
<div class="a" style="left:570px;top:278px;width:63px;height:18px;background:#f0f0f0"></div>
<div class="t" style="top:280px;font-size:12px;line-height:14px;height:14px;color:#000;left:571px;transform-origin:0 50%;transform:scaleX(0.9813);">DATUM</div>
<div class="a" style="left:634px;top:277px;width:21px;height:20px;background:#fff;border-right:1px solid #000;border-bottom:1px solid #000"></div>
<div class="a" style="left:635px;top:278px;width:19px;height:18px;background:#f0f0f0"></div>
<div class="t" style="top:280px;font-size:12px;line-height:14px;height:14px;color:#000;left:636px;transform-origin:0 50%;transform:scaleX(0.999);">AA</div>
<div class="a" style="left:655px;top:277px;width:195px;height:20px;background:#fff;border-right:1px solid #000;border-bottom:1px solid #000"></div>
<div class="a" style="left:656px;top:278px;width:193px;height:18px;background:#f0f0f0"></div>
<div class="t" style="top:280px;font-size:12px;line-height:14px;height:14px;color:#000;left:657px;transform-origin:0 50%;transform:scaleX(0.8388);">PROJEKTBEZ</div>
<div class="a" style="left:850px;top:277px;width:53px;height:20px;background:#fff;border-right:1px solid #000;border-bottom:1px solid #000"></div>
<div class="a" style="left:851px;top:278px;width:51px;height:18px;background:#f0f0f0"></div>
<div class="t" style="top:280px;font-size:12px;line-height:14px;height:14px;color:#000;left:852px;transform-origin:0 50%;transform:scaleX(0.9078);">CHANCE</div>
<div class="a" style="left:903px;top:277px;width:79px;height:20px;background:#fff;border-right:1px solid #000;border-bottom:1px solid #000"></div>
<div class="a" style="left:904px;top:278px;width:77px;height:18px;background:#f0f0f0"></div>
<div class="t" style="top:280px;font-size:12px;line-height:14px;height:14px;color:#000;left:905px;transform-origin:0 50%;transform:scaleX(0.8889);">AE-WERT</div>
<div class="a" style="left:539px;top:297px;width:13px;height:20px;background:#f0f0f0;border-right:1px solid #000;border-bottom:1px solid #000;border-top:1px solid #fff;border-left:1px solid #fff"></div>
<div class="a" style="left:552px;top:297px;width:17px;height:20px;background:#e8effc;border-right:1px solid #c0c0c0;border-bottom:1px solid #c0c0c0"></div>
<div class="t" style="top:300px;font-size:12px;line-height:14px;height:14px;color:#000;left:360.1px;width:400px;text-align:center;transform-origin:50% 50%;transform:scaleX(0.8733);">B</div>
<div class="a" style="left:569px;top:297px;width:65px;height:20px;background:#e8effc;border-right:1px solid #c0c0c0;border-bottom:1px solid #c0c0c0"></div>
<div class="t" style="top:300px;font-size:12px;line-height:14px;height:14px;color:#000;left:400.20000000000005px;width:400px;text-align:center;transform-origin:50% 50%;transform:scaleX(0.8991);">03.08.2021</div>
<div class="a" style="left:634px;top:297px;width:21px;height:20px;background:#e8effc;border-right:1px solid #c0c0c0;border-bottom:1px solid #c0c0c0"></div>
<div class="t" style="top:300px;font-size:12px;line-height:14px;height:14px;color:#000;left:443.20000000000005px;width:400px;text-align:center;transform-origin:50% 50%;transform:scaleX(0.8972);">2</div>
<div class="a" style="left:655px;top:297px;width:195px;height:20px;background:#e8effc;border-right:1px solid #c0c0c0;border-bottom:1px solid #c0c0c0"></div>
<div class="a" style="left:655px;top:297px;width:194px;height:20px;overflow:hidden">
<div class="t" style="top:3px;font-size:12px;line-height:14px;height:14px;color:#000;left:3px;transform-origin:0 50%;transform:scaleX(0.9736);">Anlage Gebäude A Gymnasium Ebersberg</div>
</div>
<div class="a" style="left:850px;top:297px;width:53px;height:20px;background:#e8effc;border-right:1px solid #c0c0c0;border-bottom:1px solid #c0c0c0"></div>
<div class="a" style="left:903px;top:297px;width:79px;height:20px;background:#e8effc;border-right:1px solid #c0c0c0;border-bottom:1px solid #c0c0c0"></div>
<div class="t" style="top:300px;font-size:12px;line-height:14px;height:14px;color:#000;right:58px;transform-origin:100% 50%;transform:scaleX(0.8989);">3.369 €</div>
<div class="a" style="left:539px;top:317px;width:13px;height:20px;background:#f0f0f0;border-right:1px solid #000;border-bottom:1px solid #000;border-top:1px solid #fff;border-left:1px solid #fff"></div>
<div class="a" style="left:552px;top:317px;width:17px;height:20px;background:#e8effc;border-right:1px solid #c0c0c0;border-bottom:1px solid #c0c0c0"></div>
<div class="t" style="top:320px;font-size:12px;line-height:14px;height:14px;color:#000;font-weight:bold;left:360.1px;width:400px;text-align:center;transform-origin:50% 50%;transform:scaleX(0.8072);">B</div>
<div class="a" style="left:569px;top:317px;width:65px;height:20px;background:#e8effc;border-right:1px solid #c0c0c0;border-bottom:1px solid #c0c0c0"></div>
<div class="a" style="left:634px;top:317px;width:21px;height:20px;background:#e8effc;border-right:1px solid #c0c0c0;border-bottom:1px solid #c0c0c0"></div>
<div class="a" style="left:655px;top:317px;width:195px;height:20px;background:#e8effc;border-right:1px solid #c0c0c0;border-bottom:1px solid #c0c0c0"></div>
<div class="a" style="left:655px;top:317px;width:194px;height:20px;overflow:hidden">
<div class="t" style="top:3px;font-size:12px;line-height:14px;height:14px;color:#000;font-weight:bold;left:3px;transform-origin:0 50%;transform:scaleX(0.985);">SUMME</div>
</div>
<div class="a" style="left:850px;top:317px;width:53px;height:20px;background:#e8effc;border-right:1px solid #c0c0c0;border-bottom:1px solid #c0c0c0"></div>
<div class="a" style="left:903px;top:317px;width:79px;height:20px;background:#e8effc;border-right:1px solid #c0c0c0;border-bottom:1px solid #c0c0c0"></div>
<div class="t" style="top:320px;font-size:12px;line-height:14px;height:14px;color:#000;font-weight:bold;right:58px;transform-origin:100% 50%;transform:scaleX(1.0238);">3.369 €</div>
<div class="a" style="left:539px;top:337px;width:13px;height:20px;background:#f0f0f0;border-right:1px solid #000;border-bottom:1px solid #000;border-top:1px solid #fff;border-left:1px solid #fff"></div>
<div class="a" style="left:552px;top:337px;width:17px;height:20px;background:#c3e6cb;border-right:1px solid #c0c0c0;border-bottom:1px solid #c0c0c0"></div>
<div class="t" style="top:340px;font-size:12px;line-height:14px;height:14px;color:#000;left:360.1px;width:400px;text-align:center;transform-origin:50% 50%;transform:scaleX(0.9981);">A</div>
<div class="a" style="left:569px;top:337px;width:65px;height:20px;background:#c3e6cb;border-right:1px solid #c0c0c0;border-bottom:1px solid #c0c0c0"></div>
<div class="t" style="top:340px;font-size:12px;line-height:14px;height:14px;color:#000;left:400.20000000000005px;width:400px;text-align:center;transform-origin:50% 50%;transform:scaleX(0.8991);">07.08.2021</div>
<div class="a" style="left:634px;top:337px;width:21px;height:20px;background:#c3e6cb;border-right:1px solid #c0c0c0;border-bottom:1px solid #c0c0c0"></div>
<div class="t" style="top:340px;font-size:12px;line-height:14px;height:14px;color:#000;left:443.20000000000005px;width:400px;text-align:center;transform-origin:50% 50%;transform:scaleX(0.8972);">1</div>
<div class="a" style="left:655px;top:337px;width:195px;height:20px;background:#c3e6cb;border-right:1px solid #c0c0c0;border-bottom:1px solid #c0c0c0"></div>
<div class="a" style="left:655px;top:337px;width:194px;height:20px;overflow:hidden">
<div class="t" style="top:3px;font-size:12px;line-height:14px;height:14px;color:#000;left:3px;transform-origin:0 50%;transform:scaleX(0.9763);">Schaltschrank Neubau Sportcenter Poing</div>
</div>
<div class="a" style="left:850px;top:337px;width:53px;height:20px;background:#c3e6cb;border-right:1px solid #c0c0c0;border-bottom:1px solid #c0c0c0"></div>
<div class="t" style="top:340px;font-size:12px;line-height:14px;height:14px;color:#000;right:137px;transform-origin:100% 50%;transform:scaleX(0.9138);">50 %</div>
<div class="a" style="left:903px;top:337px;width:79px;height:20px;background:#c3e6cb;border-right:1px solid #c0c0c0;border-bottom:1px solid #c0c0c0"></div>
<div class="t" style="top:340px;font-size:12px;line-height:14px;height:14px;color:#000;right:58px;transform-origin:100% 50%;transform:scaleX(0.8989);">2.077 €</div>
<div class="a" style="left:539px;top:357px;width:13px;height:20px;background:#f0f0f0;border-right:1px solid #000;border-bottom:1px solid #000;border-top:1px solid #fff;border-left:1px solid #fff"></div>
<div class="a" style="left:552px;top:357px;width:17px;height:20px;background:#c3e6cb;border-right:1px solid #c0c0c0;border-bottom:1px solid #c0c0c0"></div>
<div class="t" style="top:360px;font-size:12px;line-height:14px;height:14px;color:#000;left:360.1px;width:400px;text-align:center;transform-origin:50% 50%;transform:scaleX(0.9981);">A</div>
<div class="a" style="left:569px;top:357px;width:65px;height:20px;background:#c3e6cb;border-right:1px solid #c0c0c0;border-bottom:1px solid #c0c0c0"></div>
<div class="t" style="top:360px;font-size:12px;line-height:14px;height:14px;color:#000;left:400.20000000000005px;width:400px;text-align:center;transform-origin:50% 50%;transform:scaleX(0.8991);">07.08.2021</div>
<div class="a" style="left:634px;top:357px;width:21px;height:20px;background:#c3e6cb;border-right:1px solid #c0c0c0;border-bottom:1px solid #c0c0c0"></div>
<div class="t" style="top:360px;font-size:12px;line-height:14px;height:14px;color:#000;left:443.20000000000005px;width:400px;text-align:center;transform-origin:50% 50%;transform:scaleX(0.8972);">1</div>
<div class="a" style="left:655px;top:357px;width:195px;height:20px;background:#c3e6cb;border-right:1px solid #c0c0c0;border-bottom:1px solid #c0c0c0"></div>
<div class="a" style="left:655px;top:357px;width:194px;height:20px;overflow:hidden">
<div class="t" style="top:3px;font-size:12px;line-height:14px;height:14px;color:#000;left:3px;transform-origin:0 50%;transform:scaleX(0.9849);">Lüftungsanlage Neubau Gemeinde Sauerlach</div>
</div>
<div class="a" style="left:850px;top:357px;width:53px;height:20px;background:#c3e6cb;border-right:1px solid #c0c0c0;border-bottom:1px solid #c0c0c0"></div>
<div class="t" style="top:360px;font-size:12px;line-height:14px;height:14px;color:#000;right:137px;transform-origin:100% 50%;transform:scaleX(0.9138);">50 %</div>
<div class="a" style="left:903px;top:357px;width:79px;height:20px;background:#c3e6cb;border-right:1px solid #c0c0c0;border-bottom:1px solid #c0c0c0"></div>
<div class="t" style="top:360px;font-size:12px;line-height:14px;height:14px;color:#000;right:58px;transform-origin:100% 50%;transform:scaleX(0.8989);">2.599 €</div>
<div class="a" style="left:539px;top:377px;width:13px;height:20px;background:#f0f0f0;border-right:1px solid #000;border-bottom:1px solid #000;border-top:1px solid #fff;border-left:1px solid #fff"></div>
<div class="a" style="left:552px;top:377px;width:17px;height:20px;background:#c3e6cb;border-right:1px solid #c0c0c0;border-bottom:1px solid #c0c0c0"></div>
<div class="t" style="top:380px;font-size:12px;line-height:14px;height:14px;color:#000;left:360.1px;width:400px;text-align:center;transform-origin:50% 50%;transform:scaleX(0.9981);">A</div>
<div class="a" style="left:569px;top:377px;width:65px;height:20px;background:#c3e6cb;border-right:1px solid #c0c0c0;border-bottom:1px solid #c0c0c0"></div>
<div class="t" style="top:380px;font-size:12px;line-height:14px;height:14px;color:#000;left:400.20000000000005px;width:400px;text-align:center;transform-origin:50% 50%;transform:scaleX(0.8991);">08.08.2021</div>
<div class="a" style="left:634px;top:377px;width:21px;height:20px;background:#c3e6cb;border-right:1px solid #c0c0c0;border-bottom:1px solid #c0c0c0"></div>
<div class="t" style="top:380px;font-size:12px;line-height:14px;height:14px;color:#000;left:443.20000000000005px;width:400px;text-align:center;transform-origin:50% 50%;transform:scaleX(0.8972);">2</div>
<div class="a" style="left:655px;top:377px;width:195px;height:20px;background:#c3e6cb;border-right:1px solid #c0c0c0;border-bottom:1px solid #c0c0c0"></div>
<div class="a" style="left:655px;top:377px;width:194px;height:20px;overflow:hidden">
<div class="t" style="top:3px;font-size:12px;line-height:14px;height:14px;color:#000;left:3px;transform-origin:0 50%;transform:scaleX(0.9634);">MSR Sanierung Krankenhaus Trudering</div>
</div>
<div class="a" style="left:850px;top:377px;width:53px;height:20px;background:#c3e6cb;border-right:1px solid #c0c0c0;border-bottom:1px solid #c0c0c0"></div>
<div class="t" style="top:380px;font-size:12px;line-height:14px;height:14px;color:#000;right:137px;transform-origin:100% 50%;transform:scaleX(0.9138);">70 %</div>
<div class="a" style="left:903px;top:377px;width:79px;height:20px;background:#c3e6cb;border-right:1px solid #c0c0c0;border-bottom:1px solid #c0c0c0"></div>
<div class="t" style="top:380px;font-size:12px;line-height:14px;height:14px;color:#000;right:58px;transform-origin:100% 50%;transform:scaleX(0.8989);">3.682 €</div>
<div class="a" style="left:539px;top:397px;width:13px;height:20px;background:#f0f0f0;border-right:1px solid #000;border-bottom:1px solid #000;border-top:1px solid #fff;border-left:1px solid #fff"></div>
<div class="a" style="left:552px;top:397px;width:17px;height:20px;background:#c3e6cb;border-right:1px solid #c0c0c0;border-bottom:1px solid #c0c0c0"></div>
<div class="t" style="top:400px;font-size:12px;line-height:14px;height:14px;color:#000;left:360.1px;width:400px;text-align:center;transform-origin:50% 50%;transform:scaleX(0.9981);">A</div>
<div class="a" style="left:569px;top:397px;width:65px;height:20px;background:#c3e6cb;border-right:1px solid #c0c0c0;border-bottom:1px solid #c0c0c0"></div>
<div class="t" style="top:400px;font-size:12px;line-height:14px;height:14px;color:#000;left:400.20000000000005px;width:400px;text-align:center;transform-origin:50% 50%;transform:scaleX(0.8991);">10.08.2021</div>
<div class="a" style="left:634px;top:397px;width:21px;height:20px;background:#c3e6cb;border-right:1px solid #c0c0c0;border-bottom:1px solid #c0c0c0"></div>
<div class="t" style="top:400px;font-size:12px;line-height:14px;height:14px;color:#000;left:443.20000000000005px;width:400px;text-align:center;transform-origin:50% 50%;transform:scaleX(0.8972);">2</div>
<div class="a" style="left:655px;top:397px;width:195px;height:20px;background:#c3e6cb;border-right:1px solid #c0c0c0;border-bottom:1px solid #c0c0c0"></div>
<div class="a" style="left:655px;top:397px;width:194px;height:20px;overflow:hidden">
<div class="t" style="top:3px;font-size:12px;line-height:14px;height:14px;color:#000;left:3px;transform-origin:0 50%;transform:scaleX(0.9942);">Lüftungsanlage Gebäude A Grundschule</div>
</div>
<div class="a" style="left:850px;top:397px;width:53px;height:20px;background:#c3e6cb;border-right:1px solid #c0c0c0;border-bottom:1px solid #c0c0c0"></div>
<div class="t" style="top:400px;font-size:12px;line-height:14px;height:14px;color:#000;right:137px;transform-origin:100% 50%;transform:scaleX(0.9138);">90 %</div>
<div class="a" style="left:903px;top:397px;width:79px;height:20px;background:#c3e6cb;border-right:1px solid #c0c0c0;border-bottom:1px solid #c0c0c0"></div>
<div class="t" style="top:400px;font-size:12px;line-height:14px;height:14px;color:#000;right:58px;transform-origin:100% 50%;transform:scaleX(0.8989);">4.766 €</div>
<div class="a" style="left:539px;top:417px;width:13px;height:20px;background:#f0f0f0;border-right:1px solid #000;border-bottom:1px solid #000;border-top:1px solid #fff;border-left:1px solid #fff"></div>
<div class="a" style="left:552px;top:417px;width:17px;height:20px;background:#c3e6cb;border-right:1px solid #c0c0c0;border-bottom:1px solid #c0c0c0"></div>
<div class="t" style="top:420px;font-size:12px;line-height:14px;height:14px;color:#000;font-weight:bold;left:360.1px;width:400px;text-align:center;transform-origin:50% 50%;transform:scaleX(0.9225);">A</div>
<div class="a" style="left:569px;top:417px;width:65px;height:20px;background:#c3e6cb;border-right:1px solid #c0c0c0;border-bottom:1px solid #c0c0c0"></div>
<div class="a" style="left:634px;top:417px;width:21px;height:20px;background:#c3e6cb;border-right:1px solid #c0c0c0;border-bottom:1px solid #c0c0c0"></div>
<div class="a" style="left:655px;top:417px;width:195px;height:20px;background:#c3e6cb;border-right:1px solid #c0c0c0;border-bottom:1px solid #c0c0c0"></div>
<div class="a" style="left:655px;top:417px;width:194px;height:20px;overflow:hidden">
<div class="t" style="top:3px;font-size:12px;line-height:14px;height:14px;color:#000;font-weight:bold;left:3px;transform-origin:0 50%;transform:scaleX(0.985);">SUMME</div>
</div>
<div class="a" style="left:850px;top:417px;width:53px;height:20px;background:#c3e6cb;border-right:1px solid #c0c0c0;border-bottom:1px solid #c0c0c0"></div>
<div class="a" style="left:903px;top:417px;width:79px;height:20px;background:#c3e6cb;border-right:1px solid #c0c0c0;border-bottom:1px solid #c0c0c0"></div>
<div class="t" style="top:420px;font-size:12px;line-height:14px;height:14px;color:#000;font-weight:bold;right:58px;transform-origin:100% 50%;transform:scaleX(1.0274);">13.124 €</div>
<div class="a" style="left:539px;top:437px;width:13px;height:20px;background:#f0f0f0;border-right:1px solid #000;border-bottom:1px solid #000;border-top:1px solid #fff;border-left:1px solid #fff"></div>
<div class="a" style="left:552px;top:437px;width:17px;height:20px;background:#e6f6e0;border-right:1px solid #c0c0c0;border-bottom:1px solid #c0c0c0"></div>
<div class="t" style="top:440px;font-size:12px;line-height:14px;height:14px;color:#000;left:360.1px;width:400px;text-align:center;transform-origin:50% 50%;transform:scaleX(0.8972);">9</div>
<div class="a" style="left:569px;top:437px;width:65px;height:20px;background:#e6f6e0;border-right:1px solid #c0c0c0;border-bottom:1px solid #c0c0c0"></div>
<div class="t" style="top:440px;font-size:12px;line-height:14px;height:14px;color:#000;left:400.20000000000005px;width:400px;text-align:center;transform-origin:50% 50%;transform:scaleX(0.8991);">28.08.2021</div>
<div class="a" style="left:634px;top:437px;width:21px;height:20px;background:#e6f6e0;border-right:1px solid #c0c0c0;border-bottom:1px solid #c0c0c0"></div>
<div class="t" style="top:440px;font-size:12px;line-height:14px;height:14px;color:#000;left:443.20000000000005px;width:400px;text-align:center;transform-origin:50% 50%;transform:scaleX(0.8972);">1</div>
<div class="a" style="left:655px;top:437px;width:195px;height:20px;background:#e6f6e0;border-right:1px solid #c0c0c0;border-bottom:1px solid #c0c0c0"></div>
<div class="a" style="left:655px;top:437px;width:194px;height:20px;overflow:hidden">
<div class="t" style="top:3px;font-size:12px;line-height:14px;height:14px;color:#000;left:3px;transform-origin:0 50%;transform:scaleX(0.9973);">Demo-Planung Lüftungsanlage</div>
</div>
<div class="a" style="left:850px;top:437px;width:53px;height:20px;background:#e6f6e0;border-right:1px solid #c0c0c0;border-bottom:1px solid #c0c0c0"></div>
<div class="t" style="top:440px;font-size:12px;line-height:14px;height:14px;color:#000;right:137px;transform-origin:100% 50%;transform:scaleX(0.9138);">70 %</div>
<div class="a" style="left:903px;top:437px;width:79px;height:20px;background:#e6f6e0;border-right:1px solid #c0c0c0;border-bottom:1px solid #c0c0c0"></div>
<div class="t" style="top:440px;font-size:12px;line-height:14px;height:14px;color:#000;right:58px;transform-origin:100% 50%;transform:scaleX(0.8989);">4.580 €</div>
<div class="a" style="left:539px;top:457px;width:13px;height:20px;background:#f0f0f0;border-right:1px solid #000;border-bottom:1px solid #000;border-top:1px solid #fff;border-left:1px solid #fff"></div>
<div class="a" style="left:552px;top:457px;width:17px;height:20px;background:#e6f6e0;border-right:1px solid #c0c0c0;border-bottom:1px solid #c0c0c0"></div>
<div class="t" style="top:460px;font-size:12px;line-height:14px;height:14px;color:#000;left:360.1px;width:400px;text-align:center;transform-origin:50% 50%;transform:scaleX(0.8972);">0</div>
<div class="a" style="left:569px;top:457px;width:65px;height:20px;background:#e6f6e0;border-right:1px solid #c0c0c0;border-bottom:1px solid #c0c0c0"></div>
<div class="t" style="top:460px;font-size:12px;line-height:14px;height:14px;color:#000;left:400.20000000000005px;width:400px;text-align:center;transform-origin:50% 50%;transform:scaleX(0.8991);">30.08.2021</div>
<div class="a" style="left:634px;top:457px;width:21px;height:20px;background:#e6f6e0;border-right:1px solid #c0c0c0;border-bottom:1px solid #c0c0c0"></div>
<div class="t" style="top:460px;font-size:12px;line-height:14px;height:14px;color:#000;left:443.20000000000005px;width:400px;text-align:center;transform-origin:50% 50%;transform:scaleX(0.8972);">1</div>
<div class="a" style="left:655px;top:457px;width:195px;height:20px;background:#e6f6e0;border-right:1px solid #c0c0c0;border-bottom:1px solid #c0c0c0"></div>
<div class="a" style="left:655px;top:457px;width:194px;height:20px;overflow:hidden">
<div class="t" style="top:3px;font-size:12px;line-height:14px;height:14px;color:#000;left:3px;transform-origin:0 50%;transform:scaleX(0.9973);">Demo-Planung Lüftungsanlage</div>
</div>
<div class="a" style="left:850px;top:457px;width:53px;height:20px;background:#e6f6e0;border-right:1px solid #c0c0c0;border-bottom:1px solid #c0c0c0"></div>
<div class="t" style="top:460px;font-size:12px;line-height:14px;height:14px;color:#000;right:137px;transform-origin:100% 50%;transform:scaleX(0.9138);">50 %</div>
<div class="a" style="left:903px;top:457px;width:79px;height:20px;background:#e6f6e0;border-right:1px solid #c0c0c0;border-bottom:1px solid #c0c0c0"></div>
<div class="t" style="top:460px;font-size:12px;line-height:14px;height:14px;color:#000;right:58px;transform-origin:100% 50%;transform:scaleX(0.8989);">5.000 €</div>
<div class="a" style="left:539px;top:477px;width:13px;height:20px;background:#f0f0f0;border-right:1px solid #000;border-bottom:1px solid #000;border-top:1px solid #fff;border-left:1px solid #fff"></div>
<svg class="a" style="left:543px;top:481px" width="7" height="11" viewBox="0 0 7 11"><path d="M0.5 0L6.5 5.5L0.5 11Z" fill="#000"/></svg>
<div class="a" style="left:552px;top:477px;width:17px;height:20px;background:#e6f6e0;border-right:1px solid #c0c0c0;border-bottom:1px solid #c0c0c0"></div>
<div class="t" style="top:480px;font-size:12px;line-height:14px;height:14px;color:#000;font-weight:bold;left:360.1px;width:400px;text-align:center;transform-origin:50% 50%;transform:scaleX(1.0467);">0</div>
<div class="a" style="left:569px;top:477px;width:65px;height:20px;background:#e6f6e0;border-right:1px solid #c0c0c0;border-bottom:1px solid #c0c0c0"></div>
<div class="a" style="left:634px;top:477px;width:21px;height:20px;background:#e6f6e0;border-right:1px solid #c0c0c0;border-bottom:1px solid #c0c0c0"></div>
<div class="a" style="left:655px;top:477px;width:195px;height:20px;background:#e6f6e0;border-right:1px solid #c0c0c0;border-bottom:1px solid #c0c0c0"></div>
<div class="a" style="left:655px;top:477px;width:194px;height:20px;overflow:hidden">
<div class="t" style="top:3px;font-size:12px;line-height:14px;height:14px;color:#000;font-weight:bold;left:3px;transform-origin:0 50%;transform:scaleX(0.985);">SUMME</div>
</div>
<div class="a" style="left:850px;top:477px;width:53px;height:20px;background:#e6f6e0;border-right:1px solid #c0c0c0;border-bottom:1px solid #c0c0c0"></div>
<div class="a" style="left:903px;top:477px;width:79px;height:20px;background:#e6f6e0;border-right:1px solid #c0c0c0;border-bottom:1px solid #c0c0c0"></div>
<div class="t" style="top:480px;font-size:12px;line-height:14px;height:14px;color:#000;font-weight:bold;right:58px;transform-origin:100% 50%;transform:scaleX(1.0238);">9.580 €</div>
<div class="a" style="left:983px;top:276px;width:17px;height:377px;background:#f0f0f0"></div>
<div class="a" style="left:983px;top:456px;width:15px;height:179px;background:#cdcdcd"></div>
<svg class="a" style="left:986.4px;top:283px" width="8" height="6" viewBox="0 0 8 6"><path d="M0.9 4.7L4 1.6L7.1 4.7" stroke="#5a5a5a" stroke-width="1.8" fill="none"/></svg>
<svg class="a" style="left:986.4px;top:641px" width="8" height="6" viewBox="0 0 8 6"><path d="M0.9 1.3L4 4.4L7.1 1.3" stroke="#5a5a5a" stroke-width="1.8" fill="none"/></svg>
<div class="a" style="left:539px;top:653px;width:461px;height:17px;background:#f0f0f0"></div>
<div class="a" style="left:557px;top:653px;width:17px;height:15px;background:#cdcdcd"></div>
<svg class="a" style="left:545px;top:656.5px" width="6" height="8" viewBox="0 0 6 8"><path d="M5 0.6L1.6 4L5 7.4" stroke="#5a5a5a" stroke-width="1.8" fill="none"/></svg>
<svg class="a" style="left:970.5px;top:656.5px" width="6" height="8" viewBox="0 0 6 8"><path d="M1 0.6L4.4 4L1 7.4" stroke="#5a5a5a" stroke-width="1.8" fill="none"/></svg>
<div class="a" style="left:1px;top:705px;width:1034px;height:1px;background:#d7d7d7"></div>
<div class="a" style="left:499px;top:707px;width:1px;height:19px;background:#d7d7d7"></div>
<div class="a" style="left:749px;top:707px;width:1px;height:19px;background:#d7d7d7"></div>
<div class="t" style="top:710px;font-size:12px;line-height:14px;height:14px;color:#000;left:505.2px;transform-origin:0 50%;transform:scaleX(0.9706);">MA02 verbunden mit THF@XE</div>
<div class="t" style="top:710px;font-size:12px;line-height:14px;height:14px;color:#000;left:755.3px;transform-origin:0 50%;transform:scaleX(0.9939);">9 Aufträge und Prognosen</div>
<svg class="a" style="left:1022px;top:714px" width="12" height="12" viewBox="0 0 12 12" shape-rendering="crispEdges"><g fill="#b8b8b8"><rect x="9" y="1" width="2" height="2"/><rect x="6" y="4" width="2" height="2"/><rect x="9" y="4" width="2" height="2"/><rect x="3" y="7" width="2" height="2"/><rect x="6" y="7" width="2" height="2"/><rect x="9" y="7" width="2" height="2"/></g></svg>
</body>
</html>
